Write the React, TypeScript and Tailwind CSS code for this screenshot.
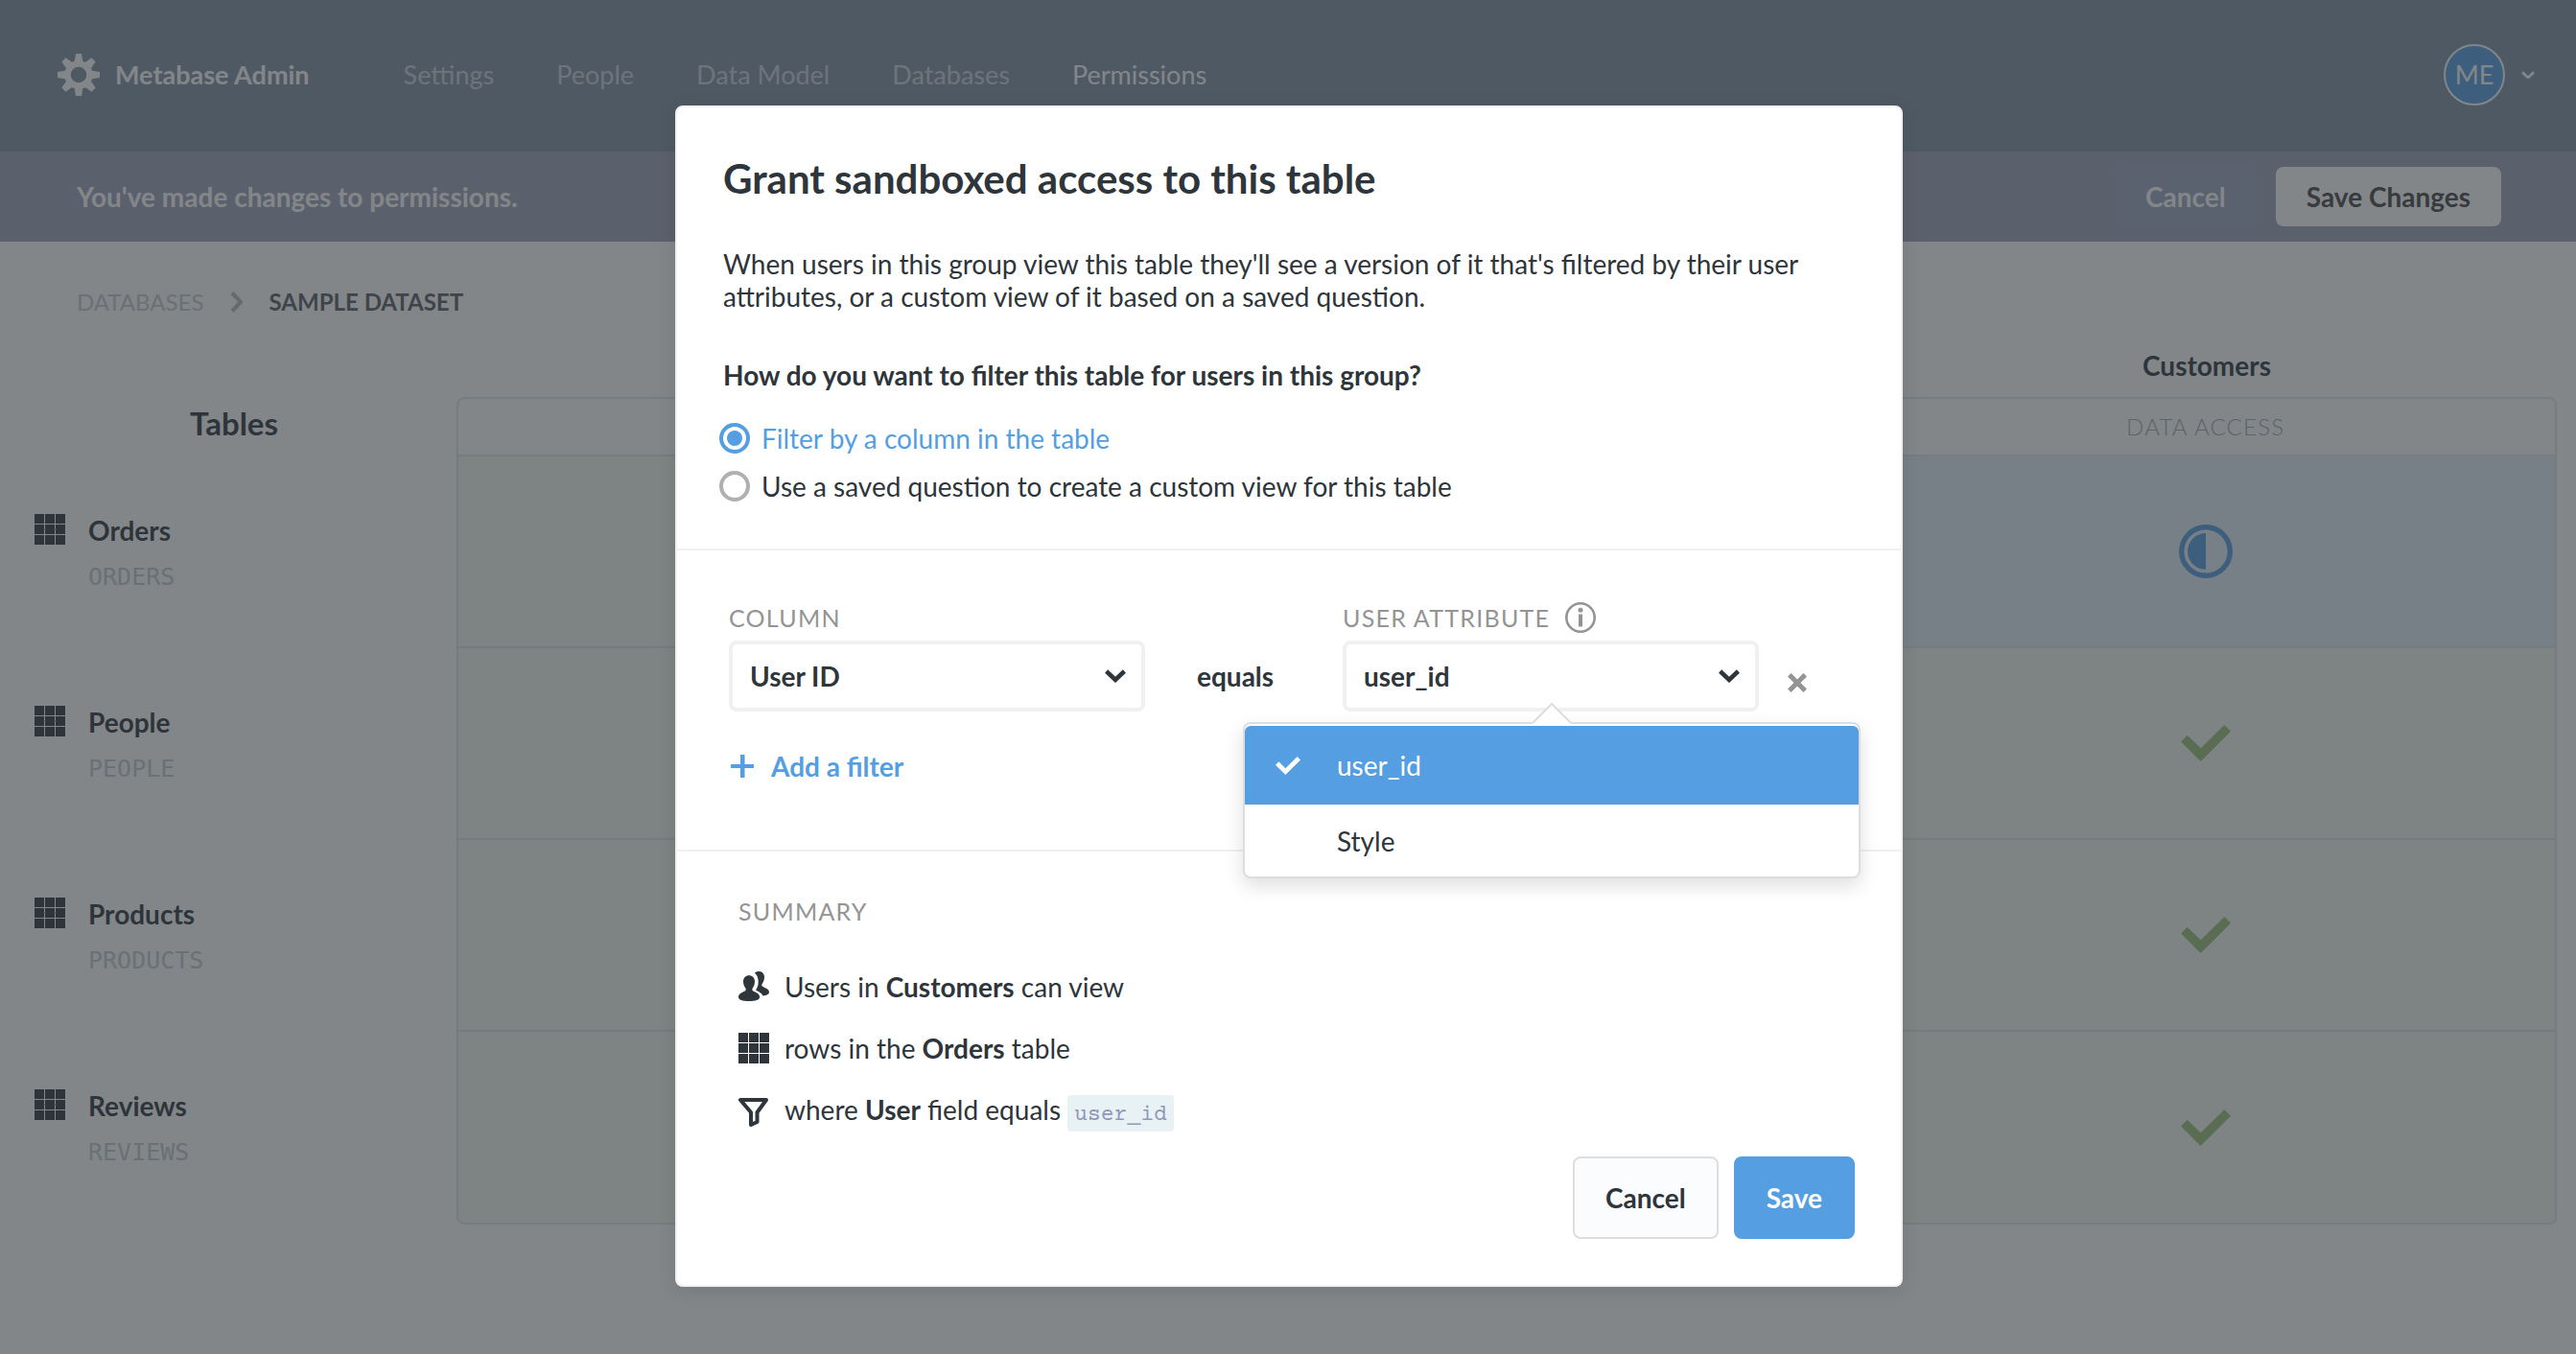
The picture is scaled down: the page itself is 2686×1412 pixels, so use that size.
import React, { useState } from "react";

type IconProps = { className?: string };

const GEAR_ANGLES = [0, 45, 90, 135, 180, 225, 270, 315];

const GearIcon = ({ className }: IconProps) => (
  <svg viewBox="0 0 44 44" className={className} fill="currentColor" aria-hidden="true">
    <circle cx="22" cy="22" r="11.5" fill="none" stroke="currentColor" strokeWidth="6.4" />
    {GEAR_ANGLES.map((a) => (
      <path key={a} d="M19 0h6l1.800 10.500h-9.600z" transform={`rotate(${a} 22 22)`} />
    ))}
  </svg>
);

const GridIcon = ({ className }: IconProps) => (
  <svg viewBox="0 0 32 32" className={className} fill="currentColor" aria-hidden="true">
    <path d="M0 0h10v10H0zM11 0h10v10H11zM22 0h10v10H22zM0 11h10v10H0zM11 11h10v10H11zM22 11h10v10H22zM0 22h10v10H0zM11 22h10v10H11zM22 22h10v10H22z" />
  </svg>
);

const ChevronDown = ({ className }: IconProps) => (
  <svg viewBox="0 0 22 14" className={className} fill="none" stroke="currentColor" strokeWidth="4.500" aria-hidden="true">
    <path d="M1.600 2 11 11 20.400 2" />
  </svg>
);

const ChevronRight = ({ className }: IconProps) => (
  <svg viewBox="0 0 14 22" className={className} fill="none" stroke="currentColor" strokeWidth="4" aria-hidden="true">
    <path d="M2 1.500 11 11 2 20.500" />
  </svg>
);

const CheckIcon = ({ className }: IconProps) => (
  <svg viewBox="0 0 52 38" className={className} fill="currentColor" aria-hidden="true">
    <path d="M0 17.500 6.700 10.700 20.700 24.300 45.300 0 52 6.800 20.700 38z" />
  </svg>
);

const SegmentIcon = ({ className }: IconProps) => (
  <svg viewBox="0 0 56 56" className={className} aria-hidden="true">
    <circle cx="28" cy="28" r="25.300" fill="none" stroke="currentColor" strokeWidth="5.400" />
    <path d="M28 9v38a19 19 0 0 1 0-38z" fill="currentColor" />
  </svg>
);

const InfoIcon = ({ className }: IconProps) => (
  <svg viewBox="0 0 32 32" className={className} aria-hidden="true">
    <circle cx="16" cy="16" r="14.700" fill="none" stroke="currentColor" strokeWidth="2.600" />
    <circle cx="16" cy="8.300" r="2.500" fill="currentColor" />
    <path d="M14 12.500h4v13h-4z" fill="currentColor" />
  </svg>
);

const CloseIcon = ({ className }: IconProps) => (
  <svg viewBox="0 0 20 20" className={className} fill="none" stroke="currentColor" strokeWidth="5" aria-hidden="true">
    <path d="M1.800 1.800 18.200 18.200M18.200 1.800 1.800 18.200" />
  </svg>
);

const PlusIcon = ({ className }: IconProps) => (
  <svg viewBox="0 0 24 24" className={className} fill="currentColor" aria-hidden="true">
    <path d="M10 0h4.500v10H24v4h-9.500v10H10V14H0v-4h10z" />
  </svg>
);

const PeopleIcon = ({ className }: IconProps) => (
  <svg viewBox="0 0 32 32" className={className} fill="currentColor" aria-hidden="true">
    <path d="M11 4.200c3.600 0 6 2.500 6 6.300 0 3.300-1.200 5.400-2.300 7.100-.5 1-.4 2.400.6 2.900 2.700 1.500 6.800 2.600 6.800 6.300 0 3-4.600 4.200-11.100 4.200S0 29.800 0 26.800c0-3.700 4.100-4.800 6.800-6.300 1-.5 1.100-1.900.6-2.900C6.300 15.900 5 13.800 5 10.500c0-3.800 2.400-6.300 6-6.300z" />
    <path d="M16.800 1.600C18 .5 19.500 0 21.300 0c3.700 0 5.700 2.500 5.700 6 0 3-.9 5-2.200 6.700-.8 1.200-.6 2.500.4 3.100 2.600 1.600 6.800 2.600 6.800 6 0 2-2.800 3.600-6.500 3.700-1.600-3.300-4.700-4.300-6.700-5.400-.6-.3-.6-.8-.3-1.400 1.300-2.200 2.200-4.500 2.200-8 0-3.800-1.400-7.100-3.900-9.100z" />
  </svg>
);

const FunnelIcon = ({ className }: IconProps) => (
  <svg viewBox="0 0 32 32" className={className} fill="none" stroke="currentColor" strokeWidth="4" strokeLinejoin="round" aria-hidden="true">
    <path d="M2 3h27L19.500 16V26l-6.500 3V16z" />
  </svg>
);

const NAV = ["Settings", "People", "Data Model", "Databases", "Permissions"];
const TABLES = ["Orders", "People", "Products", "Reviews"];

function AdminPage() {
  return (
    <div className="text-[28px] leading-[34px] text-[#2e353b]">
      <header className="flex h-[158px] items-center bg-[#8190a3] pb-[2px] pl-[60px] pr-[43px] text-[27px] text-white">
        <a href="#admin" className="flex items-center gap-4 font-bold">
          <GearIcon className="size-11" />
          Metabase Admin
        </a>
        <nav className="ml-[98px] flex gap-[65px]">
          {NAV.map((n) => (
            <a key={n} href="#nav" className={n === "Permissions" ? "text-white" : "text-white/60"}>
              {n}
            </a>
          ))}
        </nav>
        <button className="ml-auto flex items-center gap-[17px]" aria-label="Account menu">
          <span className="flex size-16 items-center justify-center rounded-full border-2 border-white bg-[#549ee1]">ME</span>
          <ChevronDown className="w-[14px]" />
        </button>
      </header>

      <div className="flex h-[94px] items-center gap-5 bg-[#9fa1b8] pl-20 pr-[78px] font-bold text-white">
        <p className="mr-auto">You've made changes to permissions.</p>
        <button className="h-[62px] rounded-lg bg-[#8fb0d4]/25 px-8">Cancel</button>
        <button className="h-[62px] rounded-lg bg-white px-8 text-[#444]">Save Changes</button>
      </div>

      <nav className="flex items-center gap-[27px] px-20 pt-[46px] text-[24px] leading-[34px]" aria-label="Breadcrumb">
        <a href="#databases" className="text-[#c4c8cc]">DATABASES</a>
        <ChevronRight className="w-[14px] text-[#b5b9bd]" />
        <span className="font-bold text-[#555b61]">SAMPLE DATASET</span>
      </nav>

      <div className="flex pr-5 pt-7">
        <aside className="w-[476px] shrink-0">
          <h2 className="pb-[68px] pl-4 pr-1 pt-16 text-center text-[33px] font-bold leading-[34px]">Tables</h2>
          {TABLES.map((t) => (
            <a key={t} href="#table" className="flex h-[200px] gap-6 pl-9 pt-[10px]">
              <GridIcon className="size-8" />
              <span>
                <span className="block font-bold">{t}</span>
                <span className="mt-[15px] block font-['DejaVu_Sans_Mono',monospace] text-[25px] text-[#c4c8cc]">{t.toUpperCase()}</span>
              </span>
            </a>
          ))}
        </aside>

        <div className="grow">
          <div className="grid grid-cols-3 pb-4 pt-1 text-center font-bold">
            <h3 className="col-start-3">Customers</h3>
          </div>
          <div className="overflow-hidden rounded-lg border-2 border-[#e2e4e8]">
            <table className="w-full table-fixed border-collapse text-center">
              <thead>
                <tr className="h-[59px]">
                  <td />
                  <td />
                  <th className="text-[24px] font-light tracking-wider text-[#a0a5aa]">DATA ACCESS</th>
                </tr>
              </thead>
              <tbody>
                {TABLES.map((t) => (
                  <tr key={t} className="h-[200px] border-t-2 border-[#e2e4e8] bg-[#f4f9f0]">
                    <td />
                    <td />
                    <td className={t === "Orders" ? "bg-[#e4effa]" : ""}>
                      {t === "Orders" ? (
                        <SegmentIcon className="mx-auto size-14 text-[#549ee1]" />
                      ) : (
                        <CheckIcon className="mx-auto w-[52px] text-[#9cc177]" />
                      )}
                    </td>
                  </tr>
                ))}
              </tbody>
            </table>
          </div>
        </div>
      </div>
    </div>
  );
}

type RadioProps = { label: string; checked: boolean; onChange: () => void };

const Radio = ({ label, checked, onChange }: RadioProps) => (
  <label className={checked ? "flex h-[50px] items-center gap-3 text-[#549ee1]" : "flex h-[50px] items-center gap-3"}>
    <input
      type="radio"
      name="filter-mode"
      checked={checked}
      onChange={onChange}
      className="size-8 appearance-none rounded-full border-4 border-[#b0b0b0] bg-clip-content p-1 checked:border-[#549ee1] checked:bg-[#549ee1]"
    />
    {label}
  </label>
);

type FieldProps = { id: string; label: string; options: string[]; info?: boolean };

const Field = ({ id, label, options, info }: FieldProps) => (
  <div className="w-[434px]">
    <div className="flex h-8 items-center gap-4 text-[#949494]">
      <label htmlFor={id} className="text-[25px] leading-8 tracking-wider">{label}</label>
      {info && <InfoIcon className="size-8" />}
    </div>
    <div className="relative mt-2">
      <select id={id} className="h-[74px] w-full appearance-none rounded-lg border-4 border-[#f0f0f0] bg-white pl-[18px] font-bold">
        {options.map((o) => (
          <option key={o}>{o}</option>
        ))}
      </select>
      <ChevronDown className="pointer-events-none absolute right-5 top-[30px] w-[22px]" />
    </div>
  </div>
);

function AttributeMenu() {
  return (
    <div className="absolute left-[-104px] top-[125px] w-[644px] rounded-lg border-2 border-[#dddddd] bg-white pt-[2px] shadow-[0_8px_20px_rgba(0,0,0,0.13)]" role="listbox">
      <svg viewBox="0 0 40 24" className="absolute left-[300px] top-[-22px] w-10" aria-hidden="true">
        <path d="M0 21 20 1l20 20v3H0z" fill="#fff" />
        <path d="M0 21 20 1l20 20" fill="none" stroke="#dddddd" strokeWidth="2" />
      </svg>
      <button role="option" aria-selected="true" className="flex h-[82px] w-full items-center rounded-t-md bg-[#549ee1] pl-8 text-white">
        <CheckIcon className="mr-[38px] w-[26px]" />
        user_id
      </button>
      <button role="option" aria-selected="false" className="flex h-[75px] w-full items-center pl-24">Style</button>
    </div>
  );
}

function SandboxModal() {
  const [mode, setMode] = useState(0);
  return (
    <section role="dialog" aria-labelledby="title" className="w-[1280px] rounded-lg border-2 border-[#f0f0f0] bg-white text-[28px] leading-[34px] text-[#2e353b] shadow-[0_4px_20px_rgba(0,0,0,0.1)]">
      <div className="border-b-2 border-[#f0f0f0] px-12 pb-10 pt-[46px]">
        <h1 id="title" className="text-[42px] font-bold leading-[56px]">Grant sandboxed access to this table</h1>
        <p className="mt-11">
          When users in this group view this table they'll see a version of it that's filtered by their user attributes, or a custom view of it based on a saved question.
        </p>
        <p className="mb-6 mt-12 font-bold">How do you want to filter this table for users in this group?</p>
        <div className="-ml-1">
          <Radio label="Filter by a column in the table" checked={mode === 0} onChange={() => setMode(0)} />
          <Radio label="Use a saved question to create a custom view for this table" checked={mode === 1} onChange={() => setMode(1)} />
        </div>
      </div>

      <div className="border-b-2 border-[#f0f0f0] px-[54px] pb-[70px] pt-[54px]">
        <div className="flex items-end">
          <Field id="column" label="COLUMN" options={["User ID"]} />
          <span className="w-[206px] pb-5 pl-[54px] font-bold">equals</span>
          <div className="relative">
            <Field id="attribute" label="USER ATTRIBUTE" options={["user_id", "Style"]} info />
            <AttributeMenu />
          </div>
          <button className="mb-5 ml-[30px]" aria-label="Remove filter">
            <CloseIcon className="size-5 text-[#949494]" />
          </button>
        </div>
        <button className="mt-10 flex items-center gap-[18px] pl-[2px] font-bold text-[#549ee1]">
          <PlusIcon className="size-6" />
          Add a filter
        </button>
      </div>

      <div className="px-16 pt-[46px]">
        <h2 className="text-[25px] leading-8 tracking-wider text-[#949494]">SUMMARY</h2>
        <ul className="mt-[46px] flex flex-col gap-[30px]">
          <li className="flex items-center gap-4">
            <PeopleIcon className="size-8" />
            <span>Users in <b>Customers</b> can view</span>
          </li>
          <li className="flex items-center gap-4">
            <GridIcon className="size-8" />
            <span>rows in the <b>Orders</b> table</span>
          </li>
          <li className="flex items-center gap-4">
            <FunnelIcon className="size-8" />
            <span>
              where <b>User</b> field equals{" "}
              <code className="rounded bg-[#e8f1f4] px-[7px] pb-1 pt-2 font-['Courier_Prime','Liberation_Mono',monospace] text-[23px] text-[#9097ba]">user_id</code>
            </span>
          </li>
        </ul>
      </div>

      <div className="flex justify-end gap-4 px-12 pb-12 pt-[26px] font-bold">
        <button className="h-[86px] rounded-lg border-2 border-[#dddddd] bg-[#fbfcfe] px-8">Cancel</button>
        <button className="h-[86px] rounded-lg border-2 border-[#549ee1] bg-[#549ee1] px-8 text-white">Save</button>
      </div>
    </section>
  );
}

export default function App() {
  return (
    <main className="relative min-h-screen bg-white font-['Lato',sans-serif]">
      <AdminPage />
      <div className="absolute inset-0 flex items-start justify-center bg-[#2e353b]/60 pl-[2px] pt-[110px]">
        <SandboxModal />
      </div>
    </main>
  );
}
